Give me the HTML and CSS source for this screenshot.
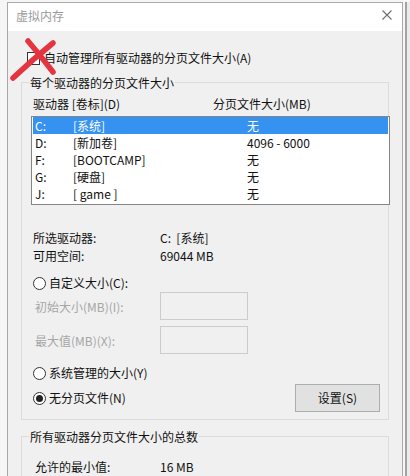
FILE: index.html
```html
<!DOCTYPE html>
<html lang="zh-CN">
<head>
<meta charset="utf-8">
<title>虚拟内存</title>
<link rel="stylesheet" href="styles.css">
</head>
<body>
<div class="desk">
  <div class="left-strip"></div>
  <div class="dialog">
    <div class="titlebar">
      <span class="title">虚拟内存</span>
      <svg class="close" width="10" height="10" viewBox="0 0 10 10"><path d="M0.5 0.5 L9.5 9.5 M9.5 0.5 L0.5 9.5" stroke="#6f6f6f" stroke-width="1.1" fill="none"/></svg>
    </div>
    <div class="body">
      <div class="auto-row"><span class="checkbox"></span><span>自动管理所有驱动器的分页文件大小(A)</span></div>

      <div class="group g1">
        <div class="legend">每个驱动器的分页文件大小</div>
        <div class="col-head"><span class="h1">驱动器 [卷标](D)</span><span>分页文件大小(MB)</span></div>
        <div class="list">
          <div class="row sel"><span class="d">C:</span><span class="v">[系统]</span><span>无</span></div>
          <div class="row"><span class="d">D:</span><span class="v">[新加卷]</span><span>4096 - 6000</span></div>
          <div class="row"><span class="d">F:</span><span class="v">[BOOTCAMP]</span><span>无</span></div>
          <div class="row"><span class="d">G:</span><span class="v">[硬盘]</span><span>无</span></div>
          <div class="row"><span class="d">J:</span><span class="v">[ game ]</span><span>无</span></div>
        </div>
        <div class="info">
          <div class="irow"><span class="ilab">所选驱动器:</span><span>C:&nbsp; [系统]</span></div>
          <div class="irow"><span class="ilab">可用空间:</span><span>69044 MB</span></div>
        </div>
        <div class="radio-row r-custom"><span class="radio"></span><span>自定义大小(C):</span></div>
        <div class="field f1"><span class="flab">初始大小(MB)(I):</span><span class="input"></span></div>
        <div class="field f2"><span class="flab">最大值(MB)(X):</span><span class="input"></span></div>
        <div class="radio-row r-sys"><span class="radio"></span><span>系统管理的大小(Y)</span></div>
        <div class="radio-row r-none"><span class="radio checked"></span><span class="grow">无分页文件(N)</span><span class="btn">设置(S)</span></div>
      </div>

      <div class="group g2">
        <div class="legend">所有驱动器分页文件大小的总数</div>
        <div class="irow total"><span class="ilab">允许的最小值:</span><span>16 MB</span></div>
      </div>
    </div>
    <svg class="redx" width="50" height="46" viewBox="0 0 50 46">
      <path d="M18 3 Q30 17 43 34" stroke="#e3343f" stroke-width="5.5" stroke-linecap="round" fill="none"/>
      <path d="M43 5 Q22 22 3 40" stroke="#e3343f" stroke-width="5.5" stroke-linecap="round" fill="none"/>
    </svg>
  </div>
  <div class="right-strip"></div>
</div>
</body>
</html>
```
FILE: styles.css
```css
html, body {
  margin: 0;
  padding: 0;
  width: 410px;
  height: 476px;
  overflow: hidden;
  background: #f6f6f6;
  font-family: "Noto Sans CJK SC", "Noto Sans", sans-serif;
  font-size: 12px;
  color: #111;
}

.desk {
  display: flex;
  height: 476px;
  padding-top: 2px;
  box-sizing: border-box;
}

.left-strip {
  width: 7px;
  flex: none;
}

.dialog {
  position: relative;
  width: 396px;
  flex: none;
  border: 1px solid #a9a9a9;
  border-bottom: none;
  background: #f0f0f0;
  box-sizing: border-box;
  overflow: hidden;
}

.right-strip {
  flex: 1;
  margin-left: 2px;
  border-left: 2px solid #a3a3a3;
  background: #ebebeb;
}

.titlebar {
  height: 28px;
  background: #ffffff;
  display: flex;
  align-items: flex-start;
}

.title {
  padding-left: 8px;
  line-height: 25px;
  color: #9a9a9a;
  flex: 1;
}

.close {
  margin-top: 7px;
  margin-right: 10px;
}

.body {
  padding-top: 19px;
}

.auto-row {
  display: flex;
  align-items: center;
  height: 16px;
  line-height: 16px;
  margin-left: 19px;
}

.checkbox {
  width: 13px;
  height: 13px;
  box-sizing: border-box;
  border: 1px solid #333;
  background: #fff;
  margin-right: 4px;
}

.group {
  margin-left: 13px;
  width: 368px;
  border: 1px solid #dcdcdc;
  box-sizing: border-box;
}

.g1 {
  margin-top: 16px;
  padding-bottom: 7px;
}

.g2 {
  margin-top: 16px;
  height: 40px;
  border-bottom: none;
}

.legend {
  display: table;
  margin-top: -8px;
  margin-left: 7px;
  padding: 0 1px;
  line-height: 16px;
  background: #f0f0f0;
}

.col-head {
  display: flex;
  margin-top: 5px;
  padding-left: 11px;
  line-height: 16px;
}

.h1 {
  width: 180px;
}

.list {
  margin-top: 4px;
  margin-left: 9px;
  width: 359px;
  box-sizing: border-box;
  border: 1px solid #858585;
  background: #ffffff;
  padding: 0 1px 2px 1px;
}

.row {
  display: flex;
  height: 17px;
  line-height: 17px;
  padding-left: 2px;
}

.row.sel {
  background: #3592f0;
  color: #ffffff;
}

.d {
  width: 38px;
}

.v {
  width: 174px;
}

.info {
  margin-top: 24px;
}

.irow {
  display: flex;
  line-height: 18px;
  padding-left: 11px;
}

.ilab {
  width: 127px;
}

.radio-row {
  display: flex;
  align-items: center;
  line-height: 16px;
  padding-left: 11px;
}

.r-custom {
  margin-top: 10px;
  height: 16px;
}

.r-sys {
  margin-top: 11px;
  height: 16px;
}

.r-none {
  margin-top: 3px;
  height: 28px;
}

.radio {
  width: 13px;
  height: 13px;
  box-sizing: border-box;
  border: 1px solid #333;
  border-radius: 50%;
  background: #fff;
  margin-right: 3px;
  display: flex;
  align-items: center;
  justify-content: center;
}

.radio.checked::after {
  content: "";
  width: 7px;
  height: 7px;
  border-radius: 50%;
  background: #222;
}

.grow {
  flex: 1;
}

.btn {
  width: 85px;
  height: 28px;
  box-sizing: border-box;
  border: 1px solid #adadad;
  background: #e1e1e1;
  margin-right: 8px;
  display: flex;
  align-items: center;
  justify-content: center;
}

.field {
  display: flex;
  align-items: center;
  height: 28px;
  padding-left: 13px;
  color: #a6a6a6;
}

.f1 {
  margin-top: 1px;
}

.f2 {
  margin-top: 6px;
}

.flab {
  width: 125px;
}

.input {
  width: 88px;
  height: 28px;
  box-sizing: border-box;
  border: 1px solid #cccccc;
  background: #f0f0f0;
}

.total {
  margin-top: 13px;
  padding-left: 13px;
}

.total .ilab {
  width: 125px;
}

.redx {
  position: absolute;
  left: 2px;
  top: 35px;
}
```
